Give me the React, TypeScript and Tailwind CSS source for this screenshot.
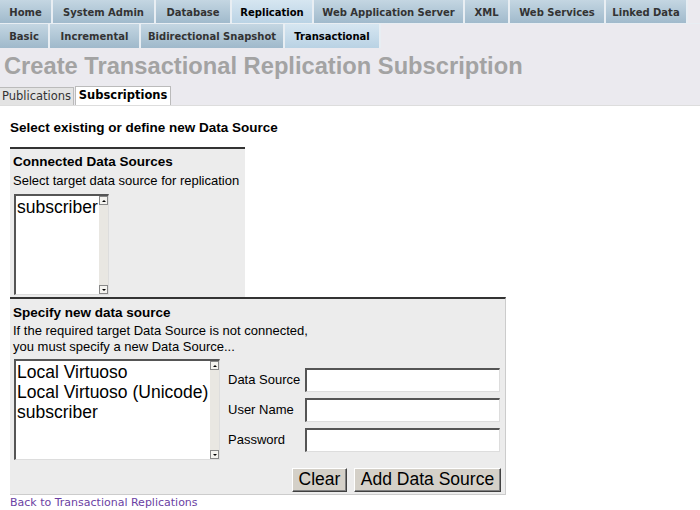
import React from 'react';

// ─── Data ─────────────────────────────────────────────────────────────────────

const mainTabs = [
  { label: 'Home', w: 53 },
  { label: 'System Admin', w: 103 },
  { label: 'Database', w: 76 },
  { label: 'Replication', w: 82, active: true },
  { label: 'Web Application Server', w: 151 },
  { label: 'XML', w: 45 },
  { label: 'Web Services', w: 96 },
  { label: 'Linked Data', w: 82 },
];

const subTabs = [
  { label: 'Basic', w: 50 },
  { label: 'Incremental', w: 91 },
  { label: 'Bidirectional Snapshot', w: 144 },
  { label: 'Transactional', w: 96, active: true },
];

const verdana = 'font-["DejaVu_Sans",Verdana,sans-serif]';
const arial = 'font-["Liberation_Sans",Arial,sans-serif]';

// ─── Sub-components ───────────────────────────────────────────────────────────

function Tab({ label, w, active }: { label: string; w: number; active?: boolean }) {
  return (
    <div
      style={{ width: w }}
      className={`h-[24px] shrink-0 flex items-center justify-center text-[10px] font-bold border-r-2 border-[#e8eef3] whitespace-nowrap ${
        active
          ? 'bg-gradient-to-b from-[#d6e6f1] to-[#b9d2e4] text-black'
          : 'bg-gradient-to-b from-[#c4d6e2] to-[#9fb9cb] text-[#333]'
      }`}
    >
      {label}
    </div>
  );
}

function ListBox({ items, w, h }: { items: string[]; w: number; h: number }) {
  return (
    <div
      style={{ width: w, height: h }}
      className={`flex bg-white border-t-2 border-l-2 border-t-[#555] border-l-[#555] border-b border-r border-b-[#ddd] border-r-[#ddd] ${arial}`}
    >
      <div className="flex-1 text-[17.5px] leading-[20px] text-black pl-[1px] pt-[1px]">
        {items.map((it) => (
          <div key={it} className="whitespace-nowrap">{it}</div>
        ))}
      </div>
      <div className="w-[9px] flex flex-col justify-between bg-[#e9e7e2]">
        <div className="h-[9px] bg-[#f4f3ef] border border-[#888] flex items-center justify-center">
          <div className="w-0 h-0 border-l-[2px] border-r-[2px] border-b-[2px] border-l-transparent border-r-transparent border-b-black" />
        </div>
        <div className="h-[9px] bg-[#f4f3ef] border border-[#888] flex items-center justify-center">
          <div className="w-0 h-0 border-l-[2px] border-r-[2px] border-t-[2px] border-l-transparent border-r-transparent border-t-black" />
        </div>
      </div>
    </div>
  );
}

function Field({ label }: { label: string }) {
  return (
    <div className="flex items-center h-[24px]">
      <span className="w-[77px] text-[13px] text-black whitespace-nowrap">{label}</span>
      <div className="w-[195px] h-[24px] bg-white border-t-2 border-l-2 border-t-[#555] border-l-[#555] border-b border-r border-b-[#ddd] border-r-[#ddd]" />
    </div>
  );
}

function Btn({ label, w }: { label: string; w: number }) {
  return (
    <button
      style={{ width: w }}
      className="h-[24px] bg-[#d4d0c8] text-[17.5px] leading-none text-black border border-t-white border-l-white border-b-[#404040] border-r-[#404040] shadow-[inset_-1px_-1px_0_#808080]"
    >
      {label}
    </button>
  );
}

// ─── Component ────────────────────────────────────────────────────────────────

export default function App() {
  return (
    <div className="w-[700px] h-[510px] bg-white overflow-hidden">
      {/* ── Header area ── */}
      <div className={`bg-[#ebeaef] ${verdana}`}>
        <div className="flex h-[24px] overflow-hidden border-b border-[#e8eef3]">
          {mainTabs.map((t) => <Tab key={t.label} {...t} />)}
        </div>
        <div className="flex h-[24px]">
          {subTabs.map((t) => <Tab key={t.label} {...t} />)}
        </div>
        <h1 className={`${arial} text-[23.7px] font-bold text-[#a3a3a3] leading-[34px] pl-[4px] pt-[1px] whitespace-nowrap`}>
          Create Transactional Replication Subscription
        </h1>
        <div className="flex items-end h-[23px] pt-[3px] border-b border-[#ddd]">
          <div className="h-[18px] px-[2px] flex items-center text-[11.5px] text-[#333] bg-[#e3e3e3] border-t border-r border-[#bbb]">
            Publications
          </div>
          <div className="h-[19px] w-[96px] ml-[1px] flex items-center justify-center text-[11.5px] font-bold text-black bg-white border-t border-r border-l border-[#bbb]">
            Subscriptions
          </div>
        </div>
      </div>

      {/* ── Body ── */}
      <div className={`px-[10px] pt-[15px] ${arial} text-black`}>
        <div className="text-[13.5px] font-bold leading-[14px]">Select existing or define new Data Source</div>

        <div className="mt-[12px] w-[235px] h-[150px] bg-[#ececec] border-t-2 border-[#333] px-[3px] pt-[4px]">
          <div className="text-[13.5px] font-bold leading-[18px]">Connected Data Sources</div>
          <div className="text-[13px] leading-[20px]">Select target data source for replication</div>
          <div className="mt-[3px] ml-[1px]">
            <ListBox items={['subscriber']} w={95} h={101} />
          </div>
        </div>

        <div className="w-[496px] h-[198px] bg-[#ececec] border-t-2 border-[#333] border-r border-b border-r-[#ccc] border-b-[#ccc] px-[3px] pt-[5px]">
          <div className="text-[13.5px] font-bold leading-[18px]">Specify new data source</div>
          <div className="text-[13px] leading-[17px]">If the required target Data Source is not connected,</div>
          <div className="text-[13px] leading-[16px]">you must specify a new Data Source...</div>
          <div className="flex mt-[4px] ml-[1px]">
            <ListBox items={['Local Virtuoso', 'Local Virtuoso (Unicode)', 'subscriber']} w={206} h={101} />
            <div className="ml-[8px] pt-[9px] flex flex-col gap-[6px]">
              <Field label="Data Source" />
              <Field label="User Name" />
              <Field label="Password" />
            </div>
          </div>
          <div className="flex justify-end gap-[7px] pr-[1px] mt-[8px]">
            <Btn label="Clear" w={55} />
            <Btn label="Add Data Source" w={147} />
          </div>
        </div>

        <div className={`${verdana} text-[11px] text-[#6b3fa3] mt-[1px] leading-[14px]`}>
          Back to Transactional Replications
        </div>
      </div>
    </div>
  );
}
